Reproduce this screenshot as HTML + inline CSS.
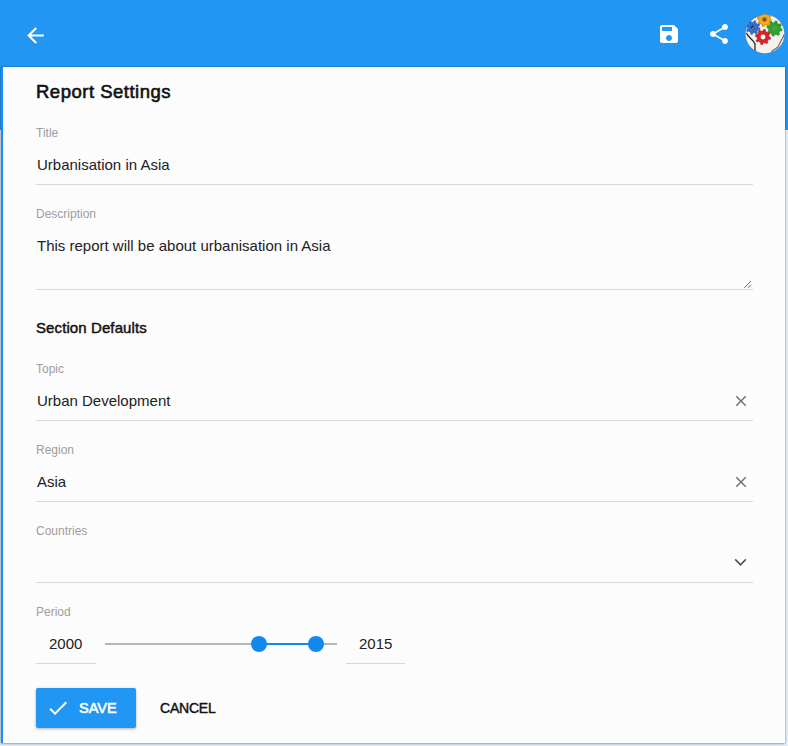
<!DOCTYPE html>
<html><head><meta charset="utf-8">
<style>
html,body{margin:0;padding:0;}
body{width:788px;height:746px;overflow:hidden;position:relative;background:#e2edf8;font-family:"Liberation Sans",sans-serif;color:#212121;}
.hdr{position:absolute;left:0;top:0;width:788px;height:130px;background:#2196f3;}
.card{position:absolute;left:1px;top:67px;width:784px;height:676px;background:#1a8cff;box-shadow:0 0 2px rgba(0,0,0,.35),0 1px 2px rgba(0,0,0,.2);}
.card>div{position:absolute;left:2px;top:0;right:0;bottom:0;background:#fcfcfc;border:1px solid #fff;}
.t{position:absolute;white-space:nowrap;line-height:1;}
.lbl{font-size:12px;color:#9d9d9d;}
.val{font-size:15px;color:#222;}
.ul{position:absolute;left:36px;width:716.5px;height:1px;background:#d8d8d8;}
svg{position:absolute;}
</style></head><body>
<div class="hdr"></div>
<svg style="left:23px;top:22.5px" width="25" height="25" viewBox="0 0 24 24"><path fill="#fff" d="M20 11H7.83l5.59-5.59L12 4l-8 8 8 8 1.41-1.41L7.83 13H20v-2z"/></svg>
<svg style="left:657px;top:22px" width="24" height="24" viewBox="0 0 24 24"><path fill="#fff" d="M17 3H5c-1.11 0-2 .9-2 2v14c0 1.1.89 2 2 2h14c1.1 0 2-.9 2-2V7l-4-4zm-5 16c-1.66 0-3-1.34-3-3s1.34-3 3-3 3 1.34 3 3-1.34 3-3 3zm3-10H5V5h10v4z"/></svg>
<svg style="left:706.5px;top:22px" width="24" height="24" viewBox="0 0 24 24"><path fill="#fff" d="M18 16.08c-.76 0-1.44.3-1.96.77L8.91 12.7c.05-.23.09-.46.09-.7s-.04-.47-.09-.7l7.050-4.110c.54.5 1.25.81 2.04.81 1.66 0 3-1.34 3-3s-1.34-3-3-3-3 1.34-3 3c0 .24.04.47.09.7L8.04 9.81C7.5 9.31 6.79 9 6 9c-1.66 0-3 1.34-3 3s1.34 3 3 3c.79 0 1.5-.31 2.04-.81l7.12 4.16c-.05.21-.08.43-.08.65 0 1.61 1.31 2.92 2.92 2.92 1.610 0 2.920-1.31 2.920-2.92s-1.31-2.92-2.92-2.92z"/></svg>
<div class="card"><div></div></div>

<div class="t" style="left:36px;top:83px;font-size:18.5px;letter-spacing:0.5px;color:#111;-webkit-text-stroke:0.6px #111">Report Settings</div>

<div class="t lbl" style="left:36px;top:127px">Title</div>
<div class="t val" style="left:37px;top:157px">Urbanisation in Asia</div>
<div class="ul" style="top:184px"></div>

<div class="t lbl" style="left:36px;top:208px">Description</div>
<div class="t val" style="left:37px;top:238px">This report will be about urbanisation in Asia</div>
<div class="ul" style="top:289px"></div>

<div class="t" style="left:36px;top:319.5px;font-size:15px;letter-spacing:0.1px;color:#111;-webkit-text-stroke:0.45px #111">Section Defaults</div>

<div class="t lbl" style="left:36px;top:363px">Topic</div>
<div class="t val" style="left:37px;top:393px">Urban Development</div>
<div class="ul" style="top:420px"></div>

<div class="t lbl" style="left:36px;top:444px">Region</div>
<div class="t val" style="left:37px;top:474px">Asia</div>
<div class="ul" style="top:501px"></div>

<div class="t lbl" style="left:36px;top:525px">Countries</div>
<div class="ul" style="top:582px"></div>

<div class="t lbl" style="left:36px;top:606px">Period</div>
<div class="t val" style="left:49px;top:636px">2000</div>
<div class="ul" style="top:663px;left:36px;width:60px"></div>
<div class="t val" style="left:359px;top:636px">2015</div>
<div class="ul" style="top:663px;left:346px;width:59px"></div>


<!-- clear icons -->
<svg style="left:732px;top:392px" width="18" height="18" viewBox="0 0 24 24"><path fill="#737373" d="M19 6.41L17.59 5 12 10.59 6.41 5 5 6.41 10.59 12 5 17.59 6.41 19 12 13.41 17.59 19 19 17.59 13.41 12z"/></svg>
<svg style="left:732px;top:473px" width="18" height="18" viewBox="0 0 24 24"><path fill="#737373" d="M19 6.41L17.59 5 12 10.59 6.41 5 5 6.41 10.59 12 5 17.59 6.41 19 12 13.41 17.59 19 19 17.59 13.41 12z"/></svg>
<!-- chevron -->
<svg style="left:728px;top:550px" width="24" height="24" viewBox="0 0 24 24"><path fill="none" stroke="#505050" stroke-width="1.55" d="M7.2 9.4L12.5 14.8 17.8 9.4"/></svg>
<!-- resize handle -->
<svg style="left:740px;top:278px" width="14" height="12" viewBox="0 0 14 12"><path stroke="#5a5a5a" stroke-width="0.9" d="M4.3 9.8L11 3M8 9.8L11 6.8"/></svg>
<!-- slider -->
<div style="position:absolute;left:105px;top:643px;width:232px;height:2px;background:#b5b5b5"></div>
<div style="position:absolute;left:259px;top:643px;width:57px;height:2px;background:#1088ee"></div>
<div style="position:absolute;left:251px;top:636px;width:16px;height:16px;border-radius:50%;background:#1088ee"></div>
<div style="position:absolute;left:308px;top:636px;width:16px;height:16px;border-radius:50%;background:#1088ee"></div>
<!-- buttons -->
<div style="position:absolute;left:36px;top:688px;width:100px;height:40px;border-radius:2px;background:#2196f3;box-shadow:0 1px 3px rgba(0,0,0,.3)"></div>
<svg style="left:46px;top:696px" width="24" height="24" viewBox="0 0 24 24"><path fill="#fff" d="M9 16.2L4.8 12l-1.4 1.4L9 19 21 7l-1.4-1.4L9 16.2z"/></svg>
<div class="t" style="left:79px;top:701px;font-size:14.5px;color:#fff;-webkit-text-stroke:0.6px #fff">SAVE</div>
<div class="t" style="left:160px;top:701px;font-size:14px;color:#111;letter-spacing:-0.2px;-webkit-text-stroke:0.45px #111">CANCEL</div>
<!-- avatar -->
<svg style="left:745px;top:14px" width="40" height="40" viewBox="0 0 40 40">
<defs><clipPath id="cp"><circle cx="20" cy="20" r="19.6"/></clipPath></defs>
<g clip-path="url(#cp)">
<rect width="40" height="40" fill="#f4f2ee"/>
<path d="M1.5 19 C3 24 9 26 10 30 L10 41" stroke="#2a2a2a" stroke-width="1.3" fill="none"/>
<path d="M39.5 20 C38 24 36 26 35 29 L33 33 L27 37 L27 41" stroke="#666" stroke-width="1.1" fill="none"/>
<path d="M2 12 C5 5 12 1 20 1" stroke="#555" stroke-width="1" fill="none"/>
<circle cx="19.5" cy="5.5" r="6.7" fill="none" stroke="#efac1c" stroke-width="2" stroke-dasharray="2.63 2.63"/><circle cx="19.5" cy="5.5" r="6" fill="#efac1c"/><circle cx="19.5" cy="5.5" r="6" fill="none" stroke="rgba(0,0,0,.18)" stroke-width="1"/><circle cx="19.5" cy="5.5" r="2.2" fill="#7a5a2a"/><circle cx="8" cy="13.5" r="6.3" fill="none" stroke="#2f6fd8" stroke-width="2" stroke-dasharray="2.47 2.47"/><circle cx="8" cy="13.5" r="5.6" fill="#2f6fd8"/><circle cx="8" cy="13.5" r="5.6" fill="none" stroke="rgba(0,0,0,.18)" stroke-width="1"/><circle cx="8" cy="13.5" r="2.1" fill="#1a3570"/><circle cx="29.5" cy="14.5" r="7.0" fill="none" stroke="#2aa52a" stroke-width="2" stroke-dasharray="2.75 2.75"/><circle cx="29.5" cy="14.5" r="6.3" fill="#2aa52a"/><circle cx="29.5" cy="14.5" r="6.3" fill="none" stroke="rgba(0,0,0,.18)" stroke-width="1"/><circle cx="29.5" cy="14.5" r="2.1" fill="#6c8c66"/><circle cx="18" cy="23" r="6.9" fill="none" stroke="#d7262a" stroke-width="2" stroke-dasharray="2.71 2.71"/><circle cx="18" cy="23" r="6.2" fill="#d7262a"/><circle cx="18" cy="23" r="6.2" fill="none" stroke="rgba(0,0,0,.18)" stroke-width="1"/><circle cx="18" cy="23" r="2.4" fill="#fff"/>
<path d="M7 15.5L10 12.5" stroke="#dfe8ff" stroke-width=".8"/>
</g>
<circle cx="20" cy="20" r="19.6" fill="none" stroke="rgba(0,0,0,.22)" stroke-width=".7"/>
</svg>
</body></html>
